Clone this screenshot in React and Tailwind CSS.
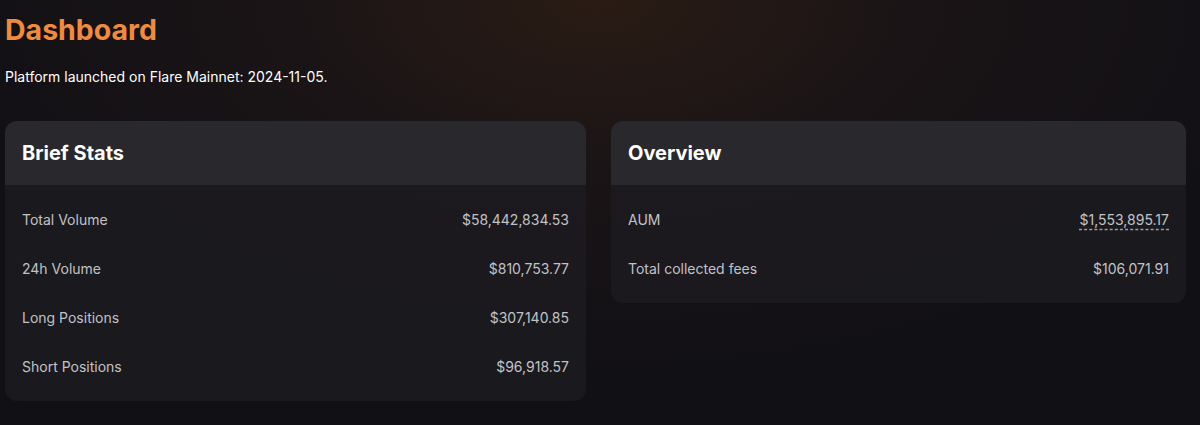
export default function App() {
  const brief = [
    ["Total Volume", "$58,442,834.53"],
    ["24h Volume", "$810,753.77"],
    ["Long Positions", "$307,140.85"],
    ["Short Positions", "$96,918.57"],
  ];
  return (
    <div
      className="w-[1200px] h-[425px] overflow-hidden bg-[#111015] bg-[radial-gradient(ellipse_700px_380px_at_600px_0px,#2a1c14_0%,#1a1416_45%,#111015_100%)] pl-[5px] text-white"
      style={{ fontFamily: "Inter, 'Noto Sans', sans-serif" }}
    >
      <h1 className="pt-[12px] text-[28.5px] leading-[36px] font-bold text-[#ee8b40]">Dashboard</h1>
      <p className="mt-[19px] text-[14px] leading-[20px] text-white">Platform launched on Flare Mainnet: 2024-11-05.</p>
      <div className="mt-[34px] grid grid-cols-[581px_575px] gap-[25px] items-start">
        <Card title="Brief Stats" rows={brief} />
        <Card
          title="Overview"
          rows={[
            ["AUM", "$1,553,895.17", true],
            ["Total collected fees", "$106,071.91"],
          ]}
        />
      </div>
    </div>
  );
}

function Card({ title, rows }) {
  return (
    <div className="rounded-[12px] overflow-hidden bg-[#1c1b1f]/90">
      <div className="h-[64px] flex items-center px-[17px] bg-[#29282c]">
        <h2 className="text-[20px] font-bold text-white leading-[28px]">{title}</h2>
      </div>
      <div className="py-[10px]">
        {rows.map(([k, v, dashed]) => (
          <div key={k} className="h-[49px] flex items-center justify-between px-[17px] text-[14px] text-[#c2c2c6]">
            <span>{k}</span>
            <span className={dashed ? "underline decoration-dashed decoration-[#9a9aa0] underline-offset-[4px]" : ""}>{v}</span>
          </div>
        ))}
      </div>
    </div>
  );
}
